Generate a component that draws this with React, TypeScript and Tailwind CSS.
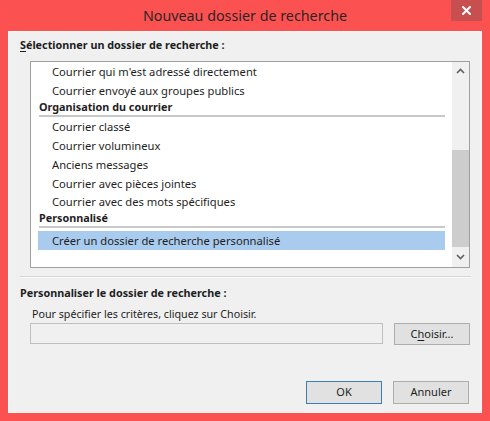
import React from "react";

const font = { fontFamily: '"Noto Sans", "Open Sans", sans-serif' };

function Item({ children, selected }: { children: React.ReactNode; selected?: boolean }) {
  return (
    <div
      className={
        "h-[18.75px] flex items-center pl-[14px] ml-[7px] mr-[7px] text-[11.2px] leading-none text-[#1e1e1e] whitespace-nowrap " +
        (selected ? "bg-[#a9cbee]" : "")
      }
    >
      {children}
    </div>
  );
}

function Header({ children }: { children: React.ReactNode }) {
  return (
    <div className="ml-[8px] mr-[7px]">
      <div className="h-[15px] flex items-center text-[10.8px] font-bold leading-none text-[#1e1e1e] whitespace-nowrap">
        {children}
      </div>
      <div className="h-[2px] bg-[#c8c8c8]" />
    </div>
  );
}

export default function App() {
  return (
    <div className="w-[490px] h-[421px] bg-[#fc5151] flex flex-col" style={font}>
      <div className="h-[31px] flex shrink-0 relative">
        <div className="flex-1 flex items-center justify-center pt-[1px] text-[14.3px] text-[#2e2424]">
          Nouveau dossier de recherche
        </div>
        <div className="absolute right-[8px] top-0 w-[31px] h-[21px] bg-[#c74f50] flex items-center justify-center">
          <svg width="9" height="9" viewBox="0 0 9 9">
            <path d="M1 1 L8 8 M8 1 L1 8" stroke="#ffffff" strokeWidth="2" strokeLinecap="square" />
          </svg>
        </div>
      </div>
      <div className="mx-[8px] h-[382px] border border-[#f8f8f8] bg-[#f0f0f0] flex flex-col text-[11px] text-[#1e1e1e]">
        <div className="mt-[5px] ml-[11px] h-[16px] flex items-center font-bold text-[10.8px]">
          <span>
            <span className="underline underline-offset-2">S</span>électionner un dossier de recherche :
          </span>
        </div>
        <div className="mt-[8px] ml-[21px] w-[440px] h-[207px] border border-[#a0a0a0] bg-white flex">
          <div className="flex-1 pt-[0px] overflow-hidden">
            <Item>Courrier qui m'est adressé directement</Item>
            <Item>Courrier envoyé aux groupes publics</Item>
            <Header>Organisation du courrier</Header>
            <div className="h-[1px]" />
            <Item>Courrier classé</Item>
            <Item>Courrier volumineux</Item>
            <Item>Anciens messages</Item>
            <Item>Courrier avec pièces jointes</Item>
            <Item>Courrier avec des mots spécifiques</Item>
            <Header>Personnalisé</Header>
            <div className="h-[2.5px]" />
            <Item selected>Créer un dossier de recherche personnalisé</Item>
          </div>
          <div className="w-[17px] bg-[#f0f0f0] flex flex-col">
            <div className="h-[17px] flex items-center justify-center">
              <svg width="9" height="6" viewBox="0 0 9 6">
                <path d="M1 5 L4.5 1.5 L8 5" stroke="#606060" strokeWidth="1.6" fill="none" />
              </svg>
            </div>
            <div className="h-[71px]" />
            <div className="mx-[0px] h-[97px] bg-[#cdcdcd]" />
            <div className="flex-1 flex items-center justify-center">
              <svg width="9" height="6" viewBox="0 0 9 6">
                <path d="M1 1 L4.5 4.5 L8 1" stroke="#606060" strokeWidth="1.6" fill="none" />
              </svg>
            </div>
          </div>
        </div>
        <div className="mt-[8px] ml-[11px] w-[451px] h-[2px] border-t border-[#d5d5d5] border-b border-b-[#fafafa]" />
        <div className="mt-[7px] ml-[11px] h-[16px] flex items-center font-bold text-[10.8px]">
          Personnaliser le dossier de recherche :
        </div>
        <div className="mt-[5px] ml-[23px] h-[16px] flex items-center text-[10.7px]">
          Pour spécifier les critères, cliquez sur Choisir.
        </div>
        <div className="mt-[1px] ml-[21px] flex items-start">
          <div className="w-[353px] h-[21px] border border-[#bfbfbf] bg-[#f0f0f0]" />
          <div className="ml-[11px] w-[76px] h-[22px] border border-[#adadad] bg-[#e1e1e1] flex items-center justify-center">
            <span>
              C<span className="underline underline-offset-2">h</span>oisir...
            </span>
          </div>
        </div>
        <div className="flex-1" />
        <div className="mb-[8px] flex justify-end gap-[11px] mr-[12px]">
          <div className="w-[76px] h-[23px] border border-[#3c7fb1] bg-[#e1e1e1] flex items-center justify-center">
            OK
          </div>
          <div className="w-[76px] h-[23px] border border-[#adadad] bg-[#e1e1e1] flex items-center justify-center">
            Annuler
          </div>
        </div>
      </div>
    </div>
  );
}
